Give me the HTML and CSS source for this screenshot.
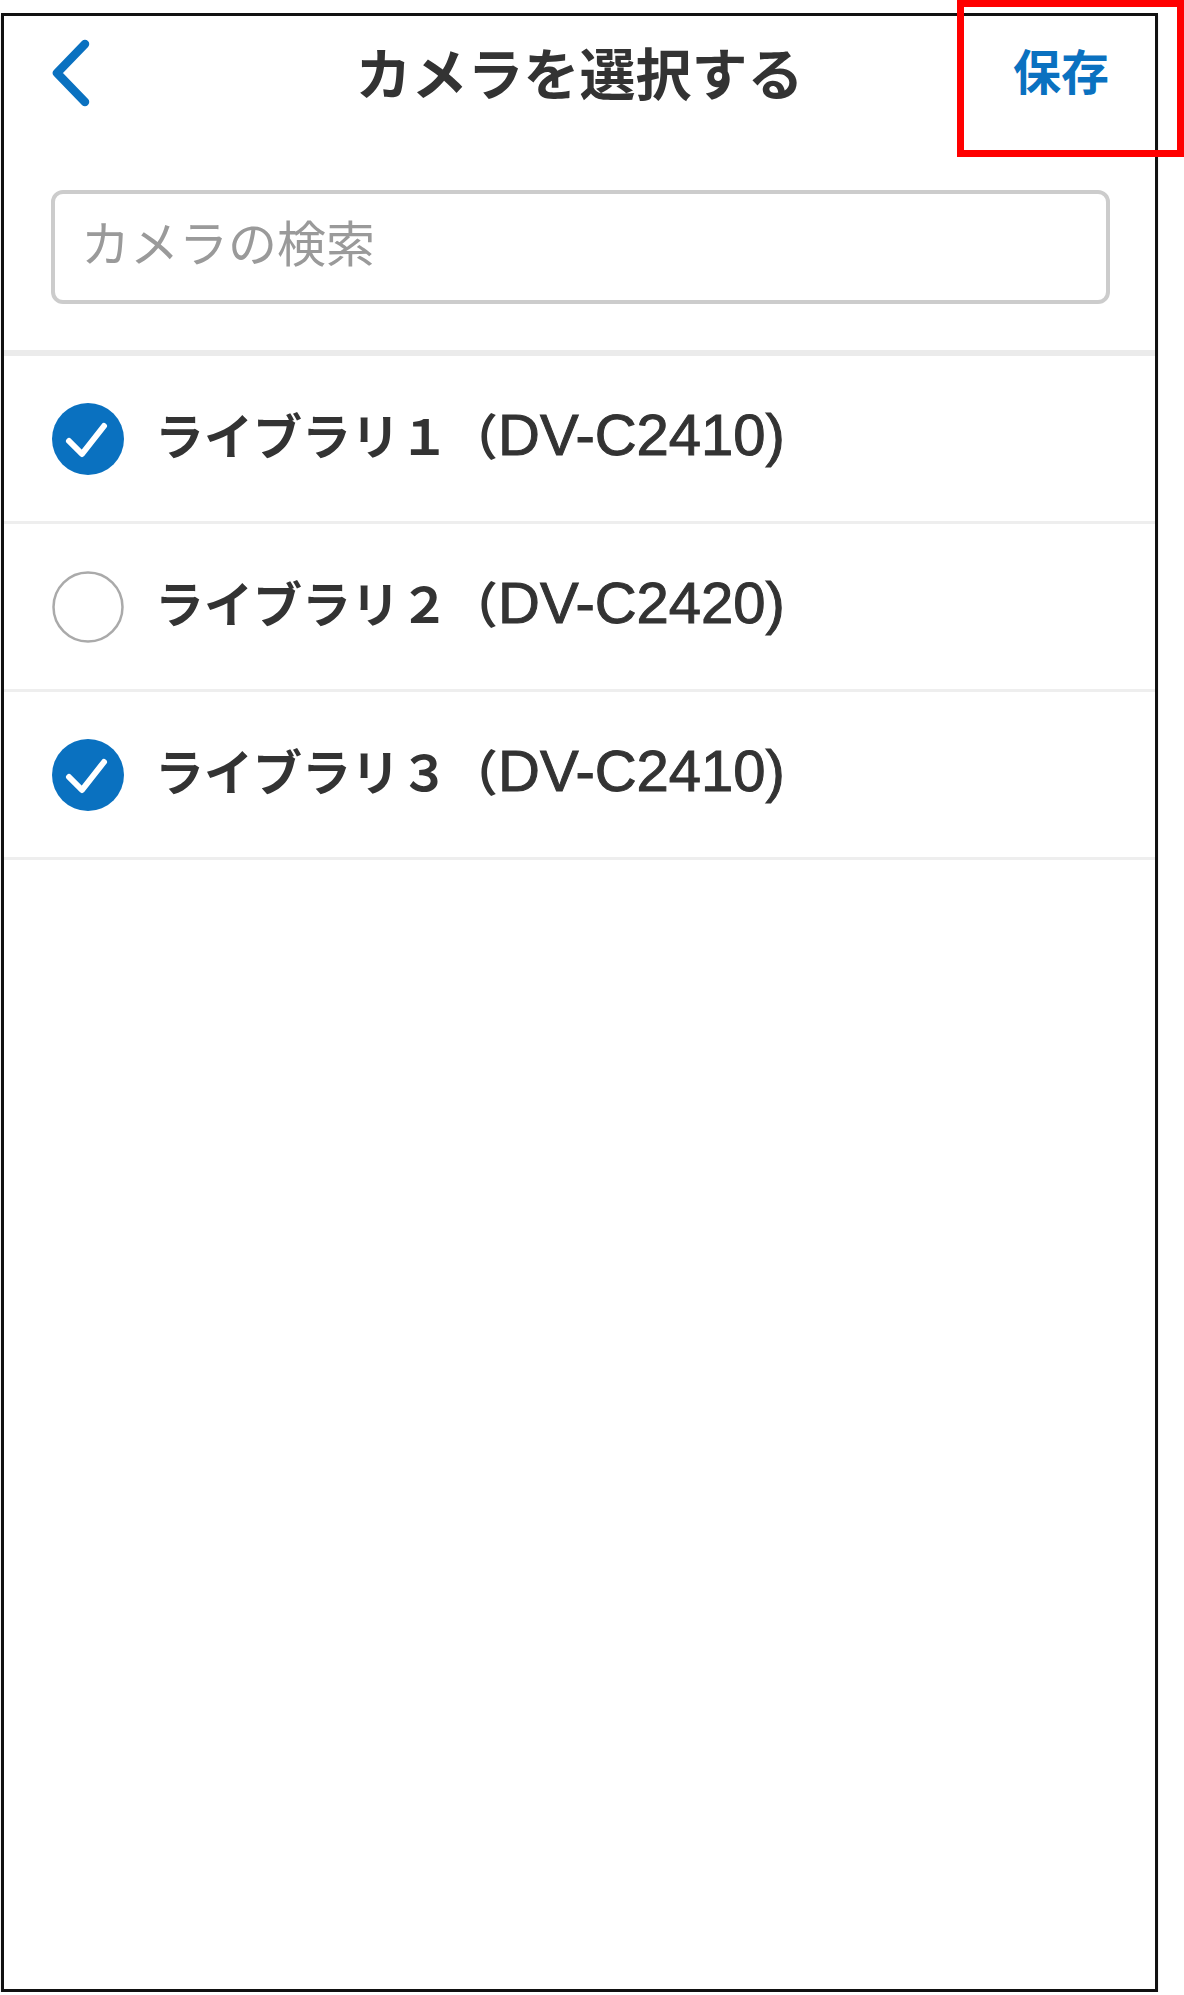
FILE: index.html
```html
<!DOCTYPE html>
<html lang="ja">
<head>
  <meta charset="UTF-8" />
  <meta name="viewport" content="width=device-width, initial-scale=1.0" />
  <title>カメラを選択する</title>
  <link rel="stylesheet" href="styles.css">
</head>
<body>
  <div class="screen">
    <header class="nav">
      <div class="nav-side nav-left">
        <button class="back" aria-label="戻る">
          <svg width="42" height="70" viewBox="0 0 42 70">
            <polyline points="35,6 7,35 35,64" fill="none" stroke="#0a71c0" stroke-width="8.5" stroke-linecap="round" stroke-linejoin="round" />
          </svg>
        </button>
      </div>
      <h1 class="nav-title">カメラを選択する</h1>
      <div class="nav-side nav-right">
        <button class="save">保存</button>
      </div>
    </header>

    <div class="search">
      <input type="text" class="search-input" placeholder="カメラの検索" />
    </div>

    <ul class="camera-list">
      <li class="camera-row">
        <svg class="check" width="72" height="72" viewBox="0 0 72 72">
          <circle cx="36" cy="36" r="36" fill="#0a71c0" />
          <polyline points="17,38 30,51 52,23" fill="none" stroke="#fff" stroke-width="6" stroke-linecap="round" stroke-linejoin="round" />
        </svg>
        <span class="camera-name">ライブラリ１（<span class="model">DV-C2410)</span></span>
      </li>
      <li class="camera-row">
        <svg class="check" width="72" height="72" viewBox="0 0 72 72">
          <circle cx="36" cy="36" r="34.5" fill="#fff" stroke="#aaaaaa" stroke-width="2.5" />
        </svg>
        <span class="camera-name">ライブラリ２（<span class="model">DV-C2420)</span></span>
      </li>
      <li class="camera-row">
        <svg class="check" width="72" height="72" viewBox="0 0 72 72">
          <circle cx="36" cy="36" r="36" fill="#0a71c0" />
          <polyline points="17,38 30,51 52,23" fill="none" stroke="#fff" stroke-width="6" stroke-linecap="round" stroke-linejoin="round" />
        </svg>
        <span class="camera-name">ライブラリ３（<span class="model">DV-C2410)</span></span>
      </li>
    </ul>
  </div>

  <!-- annotation box around the save button -->
  <div class="highlight"></div>
</body>
</html>
```

FILE: styles.css
```css
body {
  margin: 0;
  padding: 0;
  background-color: #ffffff;
  font-family: "Noto Sans CJK JP", "Noto Sans", sans-serif;
  color: #333333;
}
.screen {
  box-sizing: border-box;
  width: 1157px;
  height: 1979px;
  margin: 13px 0 0 1px;
  border: 3px solid #111111;
  background-color: #ffffff;
  box-shadow: 0 2px 2px rgba(0, 0, 0, 0.15);
}
.nav {
  display: flex;
  align-items: center;
  height: 114px;
}
.nav-side {
  width: 200px;
  display: flex;
  align-items: center;
}
.nav-left {
  padding-left: 46px;
}
.nav-right {
  justify-content: flex-end;
  padding-right: 46px;
}
.nav-title {
  flex: 1;
  margin: 0;
  padding-bottom: 5px;
  text-align: center;
  font-size: 56px;
  font-weight: 700;
  color: #333333;
  line-height: 1;
}
.back {
  display: flex;
  padding: 0;
  border: none;
  background: none;
}
.save {
  padding: 0 0 9px;
  border: none;
  background: none;
  font-family: inherit;
  font-size: 48px;
  font-weight: 700;
  color: #0a71c0;
  line-height: 1;
}
.search {
  padding: 60px 45px 46px 47px;
}
.search-input {
  box-sizing: border-box;
  width: 100%;
  height: 114px;
  padding: 0 26px 14px;
  border: 4px solid #cccccc;
  border-radius: 12px;
  font-family: inherit;
  font-size: 49px;
  color: #333333;
  outline: none;
}
.search-input::placeholder {
  color: #9a9a9a;
}
.camera-list {
  margin: 0;
  padding: 0;
  list-style: none;
  border-top: 6px solid #ebebeb;
}
.camera-row {
  display: flex;
  align-items: center;
  gap: 31px;
  height: 165px;
  padding-left: 48px;
  border-bottom: 3px solid #eeeeee;
}
.check {
  flex-shrink: 0;
}
.camera-name {
  padding-bottom: 10px;
  font-size: 49px;
  font-weight: 700;
  color: #333333;
}
.model {
  font-family: "Liberation Sans", "Noto Sans CJK JP", sans-serif;
  font-size: 58px;
  font-weight: 400;
  -webkit-text-stroke: 1px #333333;
}
.highlight {
  position: absolute;
  top: 0;
  left: 957px;
  width: 227px;
  height: 157px;
  box-sizing: border-box;
  border: 7px solid #ff0000;
}
```
